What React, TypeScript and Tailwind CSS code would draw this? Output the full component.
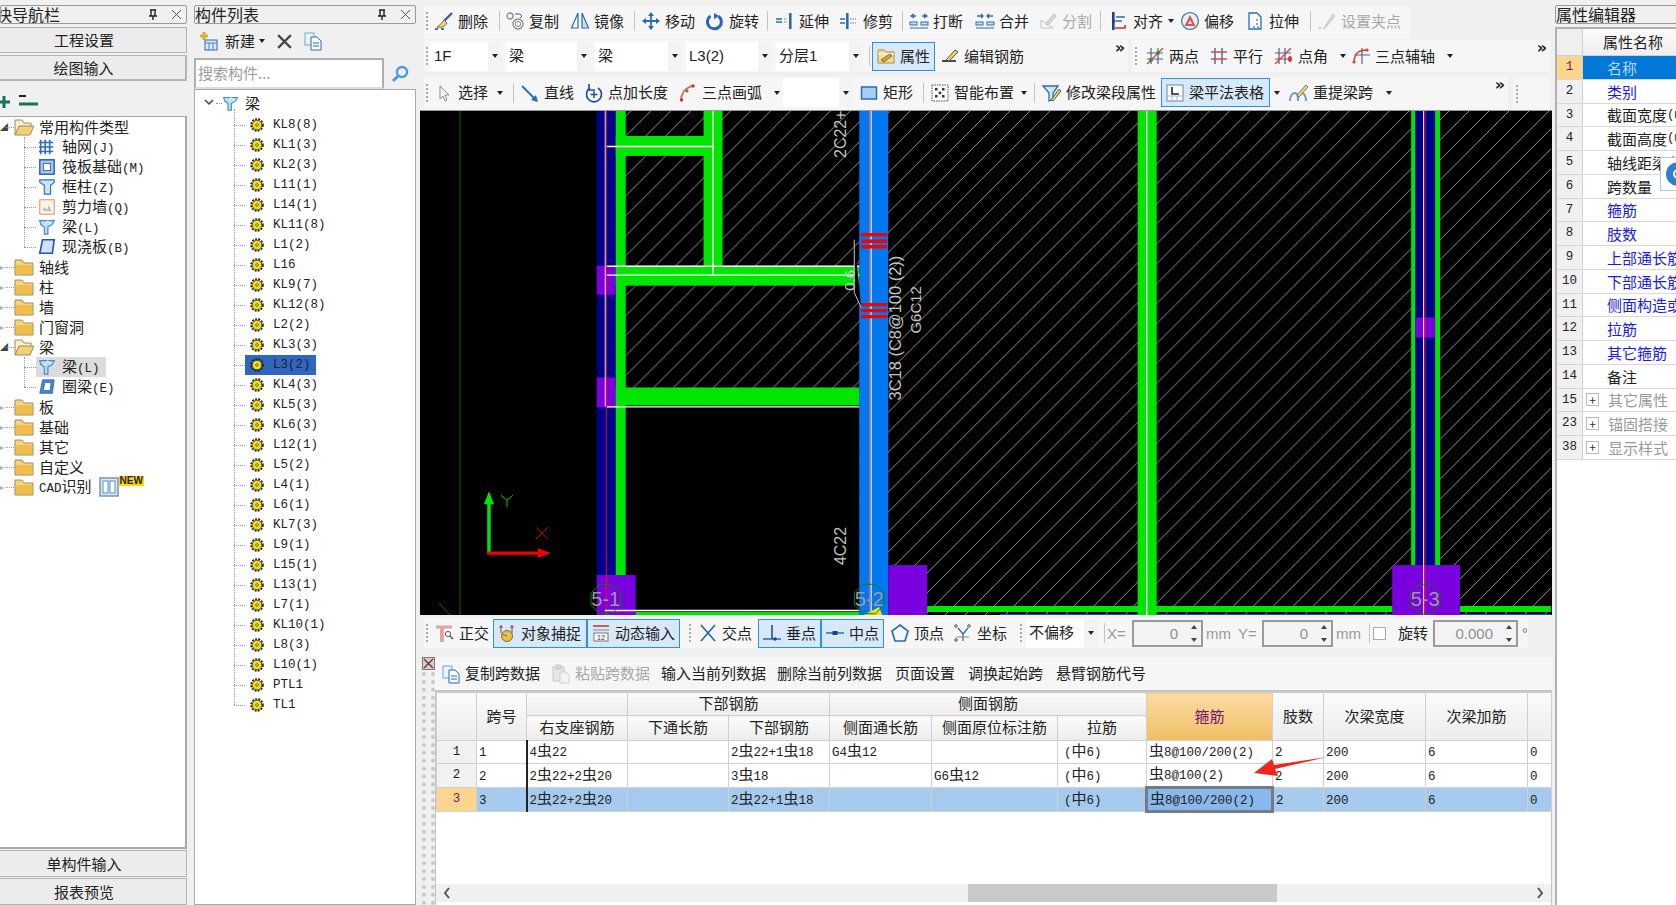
import React from 'react';

const BLUE = '#2b6cb0';
const monoCls = "font-['Liberation_Mono','Noto_Sans_CJK_SC',monospace] text-[12.5px]";

function Mixed({ text }: { text: string }) {
  const parts = text.split(/([\x00-\x7f]+)/).filter(Boolean);
  return (
    <>
      {parts.map((p, i) =>
        /^[\x00-\x7f]+$/.test(p) ? (
          <span key={i} className={monoCls}>{p}</span>
        ) : (
          <span key={i}>{p}</span>
        )
      )}
    </>
  );
}

function Svg({ children, size = 20 }: { children: React.ReactNode; size?: number }) {
  return (
    <svg width={size} height={size} viewBox="0 0 20 20" fill="none" className="shrink-0">
      {children}
    </svg>
  );
}

const icons: Record<string, React.ReactNode> = {
  erase: <><path d="M18 2 10 10" stroke="#3b5f96" strokeWidth="2.4" /><path d="M10 9c-2 3-4 5-7 7 4 1 8 0 10-4z" fill="#f4d768" stroke="#6b6b6b" /><path d="M1 18h3M7 18h3" stroke="#26467c" strokeWidth="1.4" /></>,
  copy: <><circle cx="5" cy="5" r="3" stroke="#888" strokeWidth="1.3" /><circle cx="13" cy="13" r="5" stroke="#888" strokeWidth="1.3" /><circle cx="13" cy="13" r="2.6" stroke="#888" /><path d="M10 3h5l2 2-2 2" stroke={BLUE} /></>,
  mirror: <><path d="M8 2 1.5 17H8z" stroke={BLUE} strokeWidth="1.2" /><path d="M12 2l6.5 15H12z" fill="#cfe0f5" stroke={BLUE} strokeWidth="1.2" /></>,
  move: <><path d="M10 2v16M2 10h16" stroke={BLUE} strokeWidth="1.8" /><path d="M10 1 7 5h6zM10 19l-3-4h6zM1 10l4-3v6zM19 10l-4-3v6z" fill={BLUE} /></>,
  rotate: <><path d="M5.500 5a7 7 0 1 0 8 .2" stroke="#2a62c4" strokeWidth="3" /><path d="M9 2v6l5-3z" fill="#2a62c4" /></>,
  extend: <><rect x="14" y="2" width="2.600" height="16" fill={BLUE} /><path d="M1 8h6M1 11h6" stroke={BLUE} strokeWidth="1.5" /><path d="M9 8h3M9 11h3" stroke="#777" strokeDasharray="1.5 1" /></>,
  trim: <><rect x="7" y="2" width="2.600" height="16" fill={BLUE} /><path d="M1 8h5M1 12h5" stroke={BLUE} strokeWidth="1.5" /><path d="M11 8h6M11 12h6" stroke="#777" strokeDasharray="1.5 1" /></>,
  break: <><path d="M2 5h5M13 5h5M5 3 2 5l3 2M15 3l3 2-3 2" stroke={BLUE} strokeWidth="1.3" /><rect x="1" y="11" width="7" height="3" fill="#cfe0f5" stroke={BLUE} /><rect x="12" y="11" width="7" height="3" fill="#cfe0f5" stroke={BLUE} /><path d="M1 17h18" stroke={BLUE} /></>,
  merge: <><path d="M2 5h6M12 5h6M6 3l2 2-2 2M14 3l-2 2 2 2" stroke={BLUE} strokeWidth="1.3" /><rect x="1" y="11" width="7" height="3" fill="#cfe0f5" stroke={BLUE} /><rect x="12" y="11" width="7" height="3" fill="#cfe0f5" stroke={BLUE} /><path d="M1 17h18" stroke={BLUE} /></>,
  split: <><path d="M3 17 3 9l12 8z" stroke="#c5c5c5" /><path d="M9 11l7-8 2 2-7 8-3 1z" fill="#ddd" stroke="#bbb" /></>,
  align: <><rect x="3" y="1" width="2.600" height="18" fill="#1f3f8f" /><path d="M7 6h9M7 10h6" stroke={BLUE} strokeWidth="1.6" /><path d="M6 17h10V14" stroke="#c0392b" strokeWidth="1.6" /><path d="M7 10 4.500 8v4z" fill="#1f3f8f" /></>,
  offset: <><circle cx="10" cy="10" r="8.400" stroke="#4d7f9e" strokeWidth="1.4" fill="#e8f0f6" /><path d="M10 4 4.500 15h11z" fill="#d9534f" /><path d="M10 9l-2 4h4z" fill="#f5f5f5" /></>,
  stretch: <><path d="M4 2h8l4 4v12H4z" fill="#f7f9fc" stroke={BLUE} strokeWidth="1.3" /><path d="M12 8v2M12 12v2M8 16h2M12 16h2" stroke="#444" /></>,
  grip: <><path d="M2 17h2M6 17h2" stroke="#bbb" strokeWidth="1.4" /><path d="M8 15 16 3l2 2-9 11z" fill="#ddd" stroke="#c4c4c4" /></>,
  attr: <><path d="M2 4h6l2 2h8v11H2z" fill="#f7dca0" stroke="#b5853a" /><path d="M2 8h16" stroke="#fff" /><path d="M5 14 14 8l2 2-8 6z" fill="#d7a53a" stroke="#8c6a24" /></>,
  editbar: <><path d="M2 15h14" stroke="#222" strokeWidth="1.6" /><path d="M6 14 15 4l3 2-9 9z" fill="#f2d15c" stroke="#555" /><path d="M6 14l-1 2 3-1" fill="#333" /></>,
  twopts: <><path d="M6 2v16M13 2v16M2 7h16M2 13h16" stroke="#555e8a" strokeWidth="1.2" /><path d="M2 18 18 2" stroke="#e23a3a" strokeWidth="1.2" /><circle cx="13" cy="7" r="2" fill="#3c8c3c" /><circle cx="6" cy="14" r="2" fill="#3c8c3c" /></>,
  parallel: <><path d="M6 2v16M13 2v16" stroke="#555e8a" strokeWidth="1.4" /><path d="M2 6h16M2 13h16" stroke="#c94d5a" strokeWidth="1.4" /></>,
  ptangle: <><path d="M5 2v16M11 2v16M1 7h16M1 13h16" stroke="#555e8a" strokeWidth="1.2" /><path d="M1 18 17 2" stroke="#e23a3a" strokeWidth="1.3" /><ellipse cx="16" cy="13" rx="2" ry="3" fill="#d33" /></>,
  threeaux: <><path d="M11 2v16M4 9h15" stroke="#555e8a" strokeWidth="1.2" /><path d="M3 16c0-7 4-12 13-12" stroke="#e23a3a" strokeWidth="1.5" /><circle cx="3" cy="16" r="1.6" fill="#e23a3a" /><circle cx="16" cy="4" r="1.6" fill="#e23a3a" /></>,
  select: <path d="M6 3v13l3-3 2 5 2-1-2-5h4z" fill="#fff" stroke="#7c8ba5" />,
  line: <><path d="M2 3 16 17" stroke={BLUE} strokeWidth="1.8" /><path d="M18 19l-7-2 5-5z" fill={BLUE} /></>,
  ptlen: <><path d="M6 5a7.500 7.500 0 1 0 8 0" stroke="#1f4f8f" strokeWidth="1.6" /><path d="M5 1v6h6" stroke="#1f4f8f" strokeWidth="1.6" /><path d="M10 8v7M6.500 11.500h7" stroke="#1f4f8f" strokeWidth="1.4" /></>,
  arc: <><path d="M3 18C3 10 8 5 14 3" stroke="#d9584a" strokeWidth="1.6" /><circle cx="3.500" cy="17" r="1.7" fill="#c33" /><circle cx="9" cy="8" r="1.5" fill="#3c8c3c" /><circle cx="15" cy="3" r="1.7" fill="#c33" /></>,
  rect: <rect x="2.500" y="4" width="15" height="12" fill="#a9cdf2" stroke={BLUE} strokeWidth="1.5" />,
  smart: <><rect x="2" y="2" width="16" height="16" fill="#fafafa" stroke="#555" strokeDasharray="1.5 1" /><rect x="5" y="5" width="2.500" height="2.500" fill="#333" /><rect x="12" y="5" width="2.500" height="2.500" fill="#333" /><rect x="8.700" y="8.700" width="2.500" height="2.500" fill="#333" /><rect x="5" y="12" width="2.500" height="2.500" fill="#333" /><rect x="12" y="12" width="2.500" height="2.500" fill="#333" /></>,
  modify: <><path d="M1 3h15l-5 7v6l-4 2v-8z" fill="#cfe5fa" stroke={BLUE} strokeWidth="1.3" /><path d="M9 17 17 6l2 2-8 10z" fill="#f2d15c" stroke="#555" /></>,
  table: <><rect x="2" y="2" width="16" height="16" fill="#fff" stroke="#6b87a8" /><path d="M2 13h16M7 13v5M12 13v5" stroke="#9eb4cc" /><path d="M7 4v7h7" stroke="#222" strokeWidth="1.6" /></>,
  reextract: <><path d="M1 18c0-6 3-8 5-8s3 3 3 8M9 18c0-6 2-8 4-8s4 3 4 8" stroke="#6f9ccc" strokeWidth="2" /><path d="M8 12 17 2l2 2-9 10z" fill="#f4d768" stroke="#777" /></>,
  ortho: <><path d="M1 4h16" stroke="#e2a3a3" strokeWidth="3" /><path d="M7 4v15" stroke="#e2a3a3" strokeWidth="4" /><circle cx="13" cy="11" r="2.600" stroke="#555" fill="#fff" /><path d="m15 13 3 3" stroke="#555" strokeWidth="1.5" /></>,
  snap: <><path d="M4 2v8M15 2v8" stroke="#a33" /><path d="M2 4h4M13 4h4" stroke="#555" /><circle cx="10" cy="13" r="5.500" fill="#e8c14a" stroke="#8c6a24" /><path d="M5 11l5 2" stroke="#8c6a24" /></>,
  dynamic: <><path d="M2 3h16" stroke="#b33" strokeWidth="1.5" /><path d="M2 7h16" stroke="#888" /><rect x="3" y="10" width="14" height="8" fill="#fff" stroke="#777" /><text x="10" y="17" textAnchor="middle" fontSize="7" fill="#333" fontFamily="Liberation Sans">12</text></>,
  cross: <path d="M3 2 17 18M17 2 3 18" stroke={BLUE} strokeWidth="1.8" />,
  perp: <><path d="M1 16h18" stroke={BLUE} strokeWidth="1.5" /><path d="M10 2v14" stroke="#1f3f8f" strokeWidth="1.5" /><circle cx="13" cy="16" r="1.8" fill="#1f3f8f" /></>,
  mid: <><path d="M1 10h18" stroke={BLUE} strokeWidth="1.5" /><rect x="7.500" y="8" width="5" height="4" fill="#1f3f8f" /></>,
  vertex: <path d="M10 2 18 8l-3 10H5L2 8z" stroke={BLUE} strokeWidth="1.7" fill="#f4f8fc" />,
  coord: <><path d="M5 5l5 6 5-6M10 11v7" stroke={BLUE} strokeWidth="1.3" /><path d="M3 14h13" stroke="#888" /><circle cx="3" cy="3" r="1.3" stroke="#555" /><circle cx="16" cy="3" r="1.3" stroke="#555" /><circle cx="3" cy="17" r="1.3" stroke="#555" /></>,
  newdoc: <><path d="M5 1v8M1 5h8" stroke="#d4b23e" strokeWidth="3" /><rect x="6" y="9" width="12" height="10" fill="#dce9f7" stroke={BLUE} /><path d="M6 12h12M10 12v7M14 12v7" stroke={BLUE} strokeWidth=".8" /></>,
  copydoc: <><rect x="2" y="2" width="9" height="12" fill="#eaf2fb" stroke="#7aa4d4" /><path d="M8 6h6l4 4v9H8z" fill="#f8fbff" stroke={BLUE} /><path d="M10 12h6M10 15h6" stroke={BLUE} /></>,
  pastedoc: <><rect x="2" y="3" width="11" height="14" fill="#e6e6e6" stroke="#c8c8c8" /><rect x="5" y="1" width="5" height="4" fill="#d8d8d8" stroke="#c8c8c8" /><path d="M9 8h6l3 3v8H9z" fill="#f3f3f3" stroke="#cfcfcf" /></>,
};

const treeIcons: Record<string, React.ReactNode> = {
  grid: <path d="M3 2v16M8 2v16M13 2v16M1 5h16M1 10h16M1 15h16" stroke="#2f6cc4" strokeWidth="1.8" />,
  raft: <><rect x="2" y="2" width="16" height="16" fill="#a9c8ea" stroke="#2b5ea8" strokeWidth="1.6" /><rect x="6" y="6" width="8" height="8" fill="#fff" stroke="#2b5ea8" /></>,
  column: <path d="M2 2h16v3l-4 3v10H7V8L2 5z" fill="#cfe3f7" stroke="#2f73c0" strokeWidth="1.3" />,
  wall: <><rect x="2" y="2" width="16" height="16" fill="#fff3e6" stroke="#c98a57" /><path d="M5 14l2-4 3 3 2-5 3 7z" fill="#bbb" /></>,
  beam: <><path d="M2 3h16l-2 4-5 3v8H7v-8L3 7z" fill="#bcdcf8" stroke="#3d8ad6" strokeWidth="1.3" /><path d="M10 3l5 4M7 8l4-5" stroke="#fff" /></>,
  slab: <path d="M5 2h13l-2 15H2z" fill="#cfe2f7" stroke="#1f56b0" strokeWidth="1.8" />,
  ring: <path d="M5 2h13l-2 15H2zM7.500 5 6 14h7.500l1-9z" fill="#4a86d4" stroke="#1f56b0" strokeWidth=".8" fillRule="evenodd" />,
  folder: <><path d="M1 6V3h7l2 3h9v12H1z" fill="#f5d47a" stroke="#a08a5c" /><path d="M2 8h16v9H2z" fill="#f1be4e" /></>,
  folderOpen: <><path d="M1 18V3h7l2 3h7v3" fill="#fbeec8" stroke="#a08a5c" /><path d="M1 18 5 9h15l-4 9z" fill="#f3cf75" stroke="#a08a5c" /></>,
  cad: <><rect x="1" y="1" width="18" height="18" fill="#dbe6f3" stroke="#8093a8" strokeWidth="1.5" /><rect x="4" y="4" width="5" height="12" fill="#fff" stroke="#4a90d9" /><rect x="11" y="4" width="5" height="12" fill="#fff" stroke="#4a90d9" /></>,
};

function Gear() {
  return (
    <svg width="14" height="14" viewBox="0 0 14 14" className="shrink-0">
      <circle cx="7" cy="7" r="6" fill="none" stroke="#222" strokeWidth="1.6" strokeDasharray="2 1.2" />
      <circle cx="7" cy="7" r="4.800" fill="#f2e400" stroke="#222" strokeWidth=".8" />
      <circle cx="7" cy="7" r="1.300" fill="#fff" stroke="#222" strokeWidth=".7" />
    </svg>
  );
}

function Arrow({ className = '' }: { className?: string }) {
  return <span className={`inline-block w-0 h-0 border-x-[3px] border-x-transparent border-t-[4px] border-t-[#222] shrink-0 ${className}`} />;
}

function Handle({ className = '' }: { className?: string }) {
  return <span className={`inline-block w-[2px] h-[18px] border-l-2 border-dotted border-[#aaa] shrink-0 ${className}`} />;
}

function Sep({ className = '' }: { className?: string }) {
  return (
    <span className={`flex justify-start shrink-0 ${className}`}>
      <span className="w-px h-[20px] bg-[#c4c4c4]" />
    </span>
  );
}

function Tool({ icon, label, className = '', gray, arrow }: { icon: string; label: string; className?: string; gray?: boolean; arrow?: string }) {
  return (
    <span className={`flex items-center gap-[4px] shrink-0 whitespace-nowrap leading-none ${gray ? 'text-[#a8a8a8]' : ''} ${className}`}>
      <Svg>{icons[icon]}</Svg>
      <span className="-mt-[2px]">{label}</span>
      {arrow && <Arrow className={arrow} />}
    </span>
  );
}

function Active({ icon, label, className = '' }: { icon: string; label: string; className?: string }) {
  return (
    <span className={`flex items-center gap-[4px] pl-[3px] h-[29px] border border-[#2f8fdc] bg-[#d7e9f8] shrink-0 whitespace-nowrap leading-none ${className}`}>
      <Svg>{icons[icon]}</Svg>
      <span className="-mt-[2px]">{label}</span>
    </span>
  );
}

function Combo({ text, className = '' }: { text: string; className?: string }) {
  return (
    <span className={`flex items-center justify-between h-[29px] bg-white shrink-0 leading-none ${className}`}>
      <span className="pl-[3px] -mt-[2px] font-['Liberation_Sans','Noto_Sans_CJK_SC',sans-serif] text-[15px]">{text}</span>
      <span className="w-[14px] h-full bg-[#f3f3f3] flex items-center justify-center">
        <Arrow />
      </span>
    </span>
  );
}

function Chevrons({ className = '' }: { className?: string }) {
  return <span className={`font-['DejaVu_Sans',sans-serif] font-bold text-[16px] leading-none ${className}`}>»</span>;
}

function Spin({ value, className = '' }: { value: string; className?: string }) {
  return (
    <span className={`relative flex items-center justify-end h-[27px] bg-[#f3f3f3] border-2 border-[#9a9a9a] pr-[23px] text-[#8f8f8f] font-['Liberation_Sans',sans-serif] text-[15px] leading-none shrink-0 ${className}`}>
      {value}
      <span className="absolute right-[4px] top-[3px] w-0 h-0 border-x-[3px] border-x-transparent border-b-[4px] border-b-[#444]" />
      <span className="absolute right-[4px] bottom-[3px] w-0 h-0 border-x-[3px] border-x-transparent border-t-[4px] border-t-[#444]" />
    </span>
  );
}

function TitleBar({ title, clip, tools = true, className = '' }: { title: string; clip?: string; tools?: boolean; className?: string }) {
  return (
    <div className={`mt-[5px] h-[19px] border border-[#9a9a9a] rounded-[2px] bg-[#f0f0f0] flex items-center justify-between overflow-hidden leading-none text-[16px] ${className}`}>
      <span className={`whitespace-nowrap -mt-[1px] ${clip ?? ''}`}>{title}</span>
      {tools && (
        <span className="flex items-center gap-[12px] pr-[4px]">
          <svg width="12" height="12" viewBox="0 0 12 12"><path d="M3 1h6M4 1v6h4V1M2 7h8M6 7v4" stroke="#222" strokeWidth="1.4" fill="none" /></svg>
          <svg width="11" height="11" viewBox="0 0 11 11"><path d="M1 1l9 9M10 1l-9 9" stroke="#555" /></svg>
        </span>
      )}
    </div>
  );
}

function NavButton({ label, className = '' }: { label: string; className?: string }) {
  return (
    <div className={`h-[26px] bg-[#ececec] border border-[#b5b5b5] border-l-0 flex items-center justify-center pr-[18px] leading-none ${className}`}>
      <span className="-mt-[1px]">{label}</span>
    </div>
  );
}

function LeftTree() {
  const folderRow = (label: string, open?: boolean, extra?: React.ReactNode) => (
    <div className="h-[20px] flex items-center leading-none" key={label}>
      <span className={`w-[5px] text-[8px] ${open ? 'text-[#444]' : 'text-[#aaa]'}`}>{open ? '◢' : '▸'}</span>
      <span className="w-[9px] border-t border-dotted border-[#999]" />
      <Svg>{treeIcons[open ? 'folderOpen' : 'folder']}</Svg>
      <span className="ml-[5px] -mt-[1px]"><Mixed text={label} /></span>
      {extra}
    </div>
  );
  const child = (label: string, icon: string, highlighted?: boolean) => (
    <div className="h-[20px] flex items-center leading-none" key={label}>
      <span className="w-[12px] border-t border-dotted border-[#999]" />
      <span className={`flex items-center h-[20px] pl-[2px] ${highlighted ? 'bg-[#dcdcdc] pr-[6px]' : ''}`}>
        <Svg size={18}>{treeIcons[icon]}</Svg>
        <span className="ml-[6px] -mt-[1px]"><Mixed text={label} /></span>
      </span>
    </div>
  );
  return (
    <div className="flex-1 bg-white border-b-2 border-r-2 border-t border-[#a8a8a8] overflow-hidden">
      {folderRow('常用构件类型', true)}
      <div className="relative pl-[24px]">
        <span className="absolute left-[24px] top-0 bottom-[10px] border-l border-dotted border-[#999]" />
        {child('轴网(J)', 'grid')}
        {child('筏板基础(M)', 'raft')}
        {child('框柱(Z)', 'column')}
        {child('剪力墙(Q)', 'wall')}
        {child('梁(L)', 'beam')}
        {child('现浇板(B)', 'slab')}
      </div>
      {['轴线', '柱', '墙', '门窗洞'].map((f) => folderRow(f))}
      {folderRow('梁', true)}
      <div className="relative pl-[24px]">
        <span className="absolute left-[24px] top-0 bottom-[10px] border-l border-dotted border-[#999]" />
        {child('梁(L)', 'beam', true)}
        {child('圈梁(E)', 'ring')}
      </div>
      {['板', '基础', '其它', '自定义'].map((f) => folderRow(f))}
      {folderRow(
        'CAD识别',
        false,
        <span className="flex items-start ml-[7px]">
          <Svg>{treeIcons.cad}</Svg>
          <span className="bg-[#ffd800] text-[10px] font-bold font-['Liberation_Sans',sans-serif] leading-[10px] px-[1px] -mt-[1px]">NEW</span>
        </span>
      )}
    </div>
  );
}

const members = ['KL8(8)', 'KL1(3)', 'KL2(3)', 'L11(1)', 'L14(1)', 'KL11(8)', 'L1(2)', 'L16', 'KL9(7)', 'KL12(8)', 'L2(2)', 'KL3(3)', 'L3(2)', 'KL4(3)', 'KL5(3)', 'KL6(3)', 'L12(1)', 'L5(2)', 'L4(1)', 'L6(1)', 'KL7(3)', 'L9(1)', 'L15(1)', 'L13(1)', 'L7(1)', 'KL10(1)', 'L8(3)', 'L10(1)', 'PTL1', 'TL1'];

function MemberTree() {
  return (
    <div className="flex-1 bg-white border border-[#a8a8a8] pt-[3px] overflow-hidden">
      <div className="h-[20px] flex items-center leading-none pl-[9px]">
        <svg width="10" height="8" viewBox="0 0 10 8"><path d="M1 1l4 4 4-4" stroke="#444" strokeWidth="1.5" fill="none" /></svg>
        <span className="w-[6px] ml-[2px] border-t border-dotted border-[#999]" />
        <Svg size={17}>{treeIcons.beam}</Svg>
        <span className="ml-[6px] -mt-[1px]">梁</span>
      </div>
      <div className="relative ml-[39px] mt-[2px]">
        <span className="absolute left-0 -top-[6px] bottom-[10px] border-l border-dotted border-[#999]" />
        {members.map((m) => (
          <div key={m} className="h-[20px] flex items-center leading-none">
            <span className="w-[11px] border-t border-dotted border-[#999]" />
            <span className={`flex items-center h-[20px] w-[71px] pl-[5px] ${m === 'L3(2)' ? 'bg-[#3066c0]' : ''}`}>
              <Gear />
              <span className={`ml-[9px] ${monoCls}`}>{m}</span>
            </span>
          </div>
        ))}
      </div>
    </div>
  );
}

function Octagon({ cx, cy, label }: { cx: number; cy: number; label: string }) {
  const pts = Array.from({ length: 8 }, (_, i) => {
    const a = (Math.PI / 4) * i + Math.PI / 8;
    return `${cx + 16 * Math.cos(a)},${cy + 16 * Math.sin(a)}`;
  }).join(' ');
  return (
    <g>
      <polygon points={pts} fill="none" stroke="#0a7a0a" />
      <text x={cx} y={cy + 7} textAnchor="middle" fontSize="20" fill="#9c9c9c" fontFamily="Liberation Sans">{label}</text>
    </g>
  );
}

function VText({ x, y, text, size = 16 }: { x: number; y: number; text: string; size?: number }) {
  return (
    <text transform={`translate(${x} ${y}) rotate(-90)`} fontSize={size} fill="#c4c4c4" fontFamily="Liberation Sans">{text}</text>
  );
}

function CadCanvas() {
  return (
    <div className="h-[505px] w-[1132px] border-t border-[#999] bg-black shrink-0">
      <svg viewBox="420 110 1132 505" className="block w-full h-full">
        <defs>
          <pattern id="hatch" width="20" height="20" patternUnits="userSpaceOnUse">
            <path d="M-2 22 22 -2" stroke="#939393" strokeWidth="1" />
          </pattern>
        </defs>
        <rect x="615" y="110" width="937" height="505" fill="url(#hatch)" />
        <rect x="624" y="405" width="235" height="210" fill="#000" />
        <path d="M459 110v505" stroke="#0a6a0a" />
        <path d="M438 603l11 12" stroke="#0a6a0a" />
        {/* left column */}
        <rect x="596" y="110" width="19" height="505" fill="#00008c" />
        <rect x="615" y="110" width="10" height="505" fill="#00e600" />
        <rect x="596" y="265" width="19" height="29" fill="#7a00e0" />
        <rect x="596" y="377" width="19" height="30" fill="#7a00e0" />
        <rect x="596" y="575" width="39" height="40" fill="#7a00e0" />
        <path d="M604.500 110v296" stroke="#fff" />
        <path d="M605.500 110v505" stroke="#f01010" />
        {/* beams */}
        <rect x="615" y="135" width="90" height="20" fill="#00e600" />
        <rect x="703" y="110" width="19" height="155" fill="#00e600" />
        <rect x="615" y="265" width="244" height="20" fill="#00e600" />
        <rect x="615" y="387" width="244" height="18" fill="#00e600" />
        <rect x="635" y="612" width="224" height="3" fill="#00e600" />
        <path d="M606 145.500h106M712.500 110v164M606 265.500h262M606 274.500h262M606 406.500h262M604 610.500h255" stroke="#fff" strokeWidth="1.4" />
        {/* blue beam */}
        <rect x="859" y="110" width="29" height="505" fill="#0078f0" />
        <path d="M869.500 110v505" stroke="#f06060" />
        <path d="M871 110v505" stroke="#fff" />
        <path d="M861 234h26M861 240.500h26M861 246h26M861 304h26M861 310h26M861 316h26" stroke="#f00000" strokeWidth="3.4" />
        <path d="M854 239v53l7 15" stroke="#c8c8c8" />
        <VText x={855} y={290} text="0.6" size={15} />
        <rect x="888" y="565" width="39" height="50" fill="#7a00e0" />
        <rect x="927" y="606" width="625" height="6" fill="#00e600" />
        <path d="M1000 614.500h552" stroke="#2a4fc0" />
        <path d="M863 615l16-8 3 8z" fill="#f5e100" />
        {/* right beams */}
        <rect x="1138" y="110" width="19" height="505" fill="#00e600" />
        <path d="M1147 110v505" stroke="#fff" strokeWidth="1.4" />
        <rect x="1412" y="110" width="29" height="505" fill="#00e600" />
        <rect x="1416" y="110" width="20" height="505" fill="#00008c" />
        <rect x="1416" y="317" width="20" height="20" fill="#7a00e0" />
        <rect x="1393" y="565" width="68" height="50" fill="#7a00e0" />
        <path d="M1424.500 110v505" stroke="#fff" />
        <path d="M1426 110v505" stroke="#f01010" />
        {/* labels */}
        <VText x={846} y={157} text="2C22+" />
        <VText x={846} y={565} text="4C22" />
        <VText x={901} y={400} text="3C18 (C8@100 (2))" size={16.500} />
        <VText x={921} y={333} text="G6C12" size={15} />
        <Octagon cx={605} cy={599} label="5-1" />
        <Octagon cx={869} cy={599} label="5-2" />
        <Octagon cx={1426} cy={599} label="5-3" />
        {/* axes */}
        <path d="M488 553v-50" stroke="#00e600" strokeWidth="3.5" />
        <path d="M488 491l-5 13h10z" fill="#00e600" />
        <path d="M486 553h52" stroke="#f00000" strokeWidth="3.5" />
        <path d="M550 553l-13-5v10z" fill="#f00000" />
        <path d="M500 495l6 5 6-5M506 500v7" stroke="#00c800" fill="none" />
        <path d="M535 527l12 12M547 527l-12 12" stroke="#d00000" />
      </svg>
    </div>
  );
}

const headCls = 'border border-[#d0d0d0] bg-gradient-to-b from-[#fbfbfb] to-[#ececec] text-center font-normal p-0 pb-[3px]';
const rows = [
  ['1', '1', '4虫22', '', '2虫22+1虫18', 'G4虫12', '', '(中6)', '虫8@100/200(2)', '2', '200', '6', '0'],
  ['2', '2', '2虫22+2虫20', '', '3虫18', '', 'G6虫12', '(中6)', '虫8@100(2)', '2', '200', '6', '0'],
  ['3', '3', '2虫22+2虫20', '', '2虫22+1虫18', '', '', '(中6)', '虫8@100/200(2)', '2', '200', '6', '0'],
];

function RebarTable() {
  return (
    <table className="w-full table-fixed leading-none">
      <colgroup>
        <col className="w-[40px]" /><col className="w-[50px]" /><col className="w-[101px]" /><col className="w-[101px]" /><col className="w-[101px]" /><col className="w-[102px]" /><col className="w-[126px]" /><col className="w-[89px]" /><col className="w-[126px]" /><col className="w-[51px]" /><col className="w-[102px]" /><col className="w-[102px]" /><col className="w-[24px]" />
      </colgroup>
      <thead>
        <tr className="h-[23px]">
          <th rowSpan={2} className={headCls} />
          <th rowSpan={2} className={headCls}>跨号</th>
          <th className={headCls} />
          <th colSpan={2} className={headCls}>下部钢筋</th>
          <th colSpan={3} className={headCls}>侧面钢筋</th>
          <th rowSpan={2} className="border border-[#d0d0d0] bg-gradient-to-b from-[#fbdca3] to-[#f0bf63] text-[#76146e] font-normal p-0 pb-[3px]">箍筋</th>
          <th rowSpan={2} className={headCls}>肢数</th>
          <th rowSpan={2} className={headCls}>次梁宽度</th>
          <th rowSpan={2} className={headCls}>次梁加筋</th>
          <th rowSpan={2} className={headCls} />
        </tr>
        <tr className="h-[25px]">
          {['右支座钢筋', '下通长筋', '下部钢筋', '侧面通长筋', '侧面原位标注筋', '拉筋'].map((h) => (
            <th key={h} className={headCls}>{h}</th>
          ))}
        </tr>
      </thead>
      <tbody>
        {rows.map((r, ri) => {
          const selected = ri === 2;
          return (
            <tr key={r[0]} className={`${ri === 0 ? 'h-[23px]' : 'h-[24px]'} ${selected ? 'bg-[#a6c9ee]' : 'bg-white'}`}>
              {r.map((c, i) => {
                if (i === 0) {
                  return (
                    <td key={i} className={`text-center border border-[#d0d0d0] p-0 ${monoCls} ${selected ? 'bg-[#fdd58c] text-[#76146e]' : 'bg-[#f1f1f1]'}`}>{c}</td>
                  );
                }
                const current = selected && i === 8;
                return (
                  <td
                    key={i}
                    className={`whitespace-nowrap overflow-hidden p-0 pl-[2px] pb-[2px] ${i === 2 ? 'border-l-2 border-l-[#222] border-y border-r border-y-[#d0d0d0] border-r-[#d0d0d0]' : 'border border-[#d0d0d0]'} ${current ? 'bg-[#88b9ea] !border-[3px] !border-[#727b86]' : ''} ${i === 7 ? 'pl-[6px]' : ''}`}
                  >
                    <Mixed text={c} />
                  </td>
                );
              })}
            </tr>
          );
        })}
      </tbody>
    </table>
  );
}

const propRows: [string, string, boolean][] = [
  ['1', '名称', true], ['2', '类别', true], ['3', '截面宽度(mm)', false], ['4', '截面高度(mm)', false],
  ['5', '轴线距梁左边线距离(mm)', false], ['6', '跨数量', false], ['7', '箍筋', true], ['8', '肢数', true],
  ['9', '上部通长筋', true], ['10', '下部通长筋', true], ['11', '侧面构造或受扭筋(总配筋值)', true], ['12', '拉筋', true],
  ['13', '其它箍筋', true], ['14', '备注', false],
];

function PropEditor() {
  return (
    <div className="relative flex-1 mt-[3px] bg-white border-l-2 border-t-2 border-[#b0b0b0] overflow-hidden">
      <div className="h-[27px] flex border-b border-[#cfcfcf]">
        <div className="w-[26px] bg-[#efefef] border-r border-[#cfcfcf] shrink-0" />
        <div className="flex-1 bg-gradient-to-b from-[#fbfbfb] to-[#eeeeee] flex items-center pl-[20px] whitespace-nowrap leading-none"><span className="-mt-[2px]">属性名称</span></div>
      </div>
      {propRows.map(([n, label, blue]) => {
        const selected = n === '1';
        return (
          <div key={n} className={`h-[23.75px] flex border-b border-[#d8d8d8] leading-none ${selected ? 'bg-[#0078d7]' : ''}`}>
            <div className={`w-[26px] shrink-0 flex items-center justify-center border-r border-[#cfcfcf] ${monoCls} ${selected ? 'bg-[#fdd58c] text-[#76146e]' : 'bg-[#f0f0f0]'}`}>{n}</div>
            <div className={`pl-[24px] flex items-center whitespace-nowrap ${selected ? 'text-[#bcd9f5]' : blue ? 'text-[#1a1ae6]' : ''}`}>
              <Mixed text={label} />
            </div>
          </div>
        );
      })}
      {[['15', '其它属性'], ['23', '锚固搭接'], ['38', '显示样式']].map(([n, label]) => (
        <div key={n} className="h-[23.75px] flex border-b border-[#d8d8d8] leading-none">
          <div className={`w-[26px] shrink-0 flex items-center justify-center border-r border-[#cfcfcf] bg-[#f0f0f0] ${monoCls}`}>{n}</div>
          <div className="flex items-center pl-[3px] text-[#9a9a9a]">
            <span className="w-[13px] h-[13px] border border-[#bbb] flex items-center justify-center text-[#333] text-[12px] mr-[9px]">+</span>
            {label}
          </div>
        </div>
      ))}
      {/* floating assistant tab */}
      <div className="absolute left-[103px] top-[128px] w-[20px] h-[34px] bg-white border border-[#a8c8ee] flex items-center pl-[5px]">
        <span className="w-[24px] h-[24px] rounded-full bg-[#2f7fd1] shrink-0 flex items-center justify-center">
          <span className="w-[10px] h-[10px] rounded-full border-2 border-white" />
        </span>
      </div>
    </div>
  );
}

export default function App() {
  return (
    <div className="w-[1676px] h-[905px] overflow-hidden flex bg-[#f0f0f0] text-[15px] text-[#222] font-['Noto_Sans_CJK_SC','Liberation_Sans',sans-serif]">
      {/* quick nav */}
      <div className="w-[187px] shrink-0 flex flex-col">
        <TitleBar title="快导航栏" clip="-ml-[5px]" />
        <NavButton label="工程设置" className="mt-[3px]" />
        <NavButton label="绘图输入" className="mt-[2px] border-b-2 border-r-2 border-[#8a8a8a]" />
        <div className="h-[35px] flex items-center shrink-0">
          <svg width="42" height="24" viewBox="0 0 42 24">
            <path d="M-2 15h12M4 9v12" stroke="#12735f" strokeWidth="3" />
            <path d="M19 9h7" stroke="#222" strokeWidth="2" />
            <path d="M19 17h19" stroke="#12735f" strokeWidth="3" />
          </svg>
        </div>
        <LeftTree />
        <NavButton label="单构件输入" className="mt-[1px] h-[27px]" />
        <NavButton label="报表预览" className="mt-[1px] h-[27px]" />
      </div>

      {/* member list */}
      <div className="ml-[7px] w-[222px] shrink-0 flex flex-col">
        <TitleBar title="构件列表" />
        <div className="h-[34px] flex items-center pl-[5px] shrink-0">
          <Svg>{icons.newdoc}</Svg>
          <span className="ml-[6px] -mt-[2px] leading-none">新建</span>
          <Arrow className="ml-[4px]" />
          <svg width="17" height="17" viewBox="0 0 16 16" className="ml-[11px]"><path d="M2 2l12 12M14 2 2 14" stroke="#444" strokeWidth="2" /></svg>
          <span className="ml-[10px]"><Svg>{icons.copydoc}</Svg></span>
        </div>
        <div className="h-[31px] flex shrink-0">
          <div className="w-[190px] bg-white border-2 border-[#b0b0b0] border-b-[#ddd] flex items-center pl-[2px] text-[#9c9c9c] leading-none"><span className="-mt-[2px]">搜索构件...</span></div>
          <div className="flex-1 flex items-center justify-center">
            <svg width="18" height="18" viewBox="0 0 18 18"><circle cx="11" cy="7" r="5" stroke="#4a9be0" strokeWidth="2.4" fill="none" /><path d="M7 11l-5 5" stroke="#4a9be0" strokeWidth="3" /></svg>
          </div>
        </div>
        <MemberTree />
      </div>

      {/* main */}
      <div className="ml-[4px] w-[1133px] shrink-0 flex flex-col">
        <div className="mt-[6px] ml-[4px] h-[33px] w-[986px] bg-[#f6f6f6] flex items-center pb-[3px] shrink-0">
          <Handle className="ml-[2px] mr-[6px]" />
          <Tool icon="erase" label="删除" className="w-[65px]" />
          <Sep className="w-[6px]" />
          <Tool icon="copy" label="复制" className="w-[65px]" />
          <Tool icon="mirror" label="镜像" className="w-[64px]" />
          <Sep className="w-[7px]" />
          <Tool icon="move" label="移动" className="w-[64px]" />
          <Tool icon="rotate" label="旋转" className="w-[62px]" />
          <Sep className="w-[8px]" />
          <Tool icon="extend" label="延伸" className="w-[64px]" />
          <Tool icon="trim" label="修剪" className="w-[63px]" />
          <Sep className="w-[7px]" />
          <Tool icon="break" label="打断" className="w-[66px]" />
          <Tool icon="merge" label="合并" className="w-[63px]" />
          <Tool icon="split" label="分割" className="w-[62px]" gray />
          <Sep className="w-[9px]" />
          <Tool icon="align" label="对齐" arrow="ml-[1px]" className="w-[71px]" />
          <Tool icon="offset" label="偏移" className="w-[65px]" />
          <Tool icon="stretch" label="拉伸" className="w-[65px]" />
          <Sep className="w-[7px]" />
          <Tool icon="grip" label="设置夹点" gray />
        </div>

        <div className="ml-[4px] h-[32px] flex shrink-0 mt-[1px]">
          <div className="w-[704px] bg-[#f6f6f6] flex items-center relative">
            <Handle className="ml-[2px] mr-[3px]" />
            <Combo text="1F" className="w-[71px]" />
            <Combo text="梁" className="ml-[4px] w-[85px]" />
            <Combo text="梁" className="ml-[4px] w-[87px]" />
            <Combo text="L3(2)" className="ml-[4px] w-[86px]" />
            <Combo text="分层1" className="ml-[4px] w-[87px]" />
            <Sep className="ml-[6px] w-[3px]" />
            <Active icon="attr" label="属性" className="w-[63px]" />
            <Tool icon="editbar" label="编辑钢筋" className="ml-[5px]" />
            <Chevrons className="absolute right-[3px] top-[0px]" />
          </div>
          <div className="ml-[4px] w-[418px] bg-[#f6f6f6] flex items-center relative">
            <Handle className="ml-[3px] mr-[8px]" />
            <Tool icon="twopts" label="两点" className="w-[64px]" />
            <Tool icon="parallel" label="平行" className="w-[65px]" />
            <Tool icon="ptangle" label="点角" arrow="ml-[8px]" className="w-[77px]" />
            <Tool icon="threeaux" label="三点辅轴" arrow="ml-[8px]" />
            <Chevrons className="absolute right-[3px] top-[0px]" />
          </div>
        </div>

        <div className="ml-[4px] mt-[5px] h-[33px] flex shrink-0">
          <div className="w-[1084px] bg-[#f6f6f6] flex items-center pb-[2px] relative">
            <Handle className="ml-[2px] mr-[6px]" />
            <Tool icon="select" label="选择" arrow="ml-[5px]" className="w-[79px]" />
            <Sep className="w-[7px]" />
            <Tool icon="line" label="直线" className="w-[64px]" />
            <Tool icon="ptlen" label="点加长度" className="w-[94px]" />
            <Tool icon="arc" label="三点画弧" arrow="ml-[8px]" className="w-[105px]" />
            <Combo text="" className="w-[70px] bg-white" />
            <Tool icon="rect" label="矩形" className="ml-[6px] w-[64px]" />
            <Sep className="w-[7px]" />
            <Tool icon="smart" label="智能布置" arrow="ml-[3px]" className="w-[104px]" />
            <Sep className="w-[8px]" />
            <Tool icon="modify" label="修改梁段属性" className="w-[119px]" />
            <Active icon="table" label="梁平法表格" className="w-[109px]" />
            <Arrow className="ml-[4px] mr-[9px]" />
            <Tool icon="reextract" label="重提梁跨" arrow="ml-[9px]" />
            <Chevrons className="absolute right-[3px] top-[0px]" />
          </div>
          <div className="ml-[5px] w-[37px] bg-[#f6f6f6] flex items-center pl-[3px]">
            <Handle />
          </div>
        </div>

        <CadCanvas />

        <div className="ml-[4px] mt-[3px] h-[30px] w-[1104px] bg-[#f6f6f6] flex items-center shrink-0">
          <Handle className="ml-[2px] mr-[7px]" />
          <Tool icon="ortho" label="正交" className="w-[58px]" />
          <Active icon="snap" label="对象捕捉" className="w-[94px]" />
          <Active icon="dynamic" label="动态输入" className="w-[93px]" />
          <Handle className="ml-[9px] mr-[7px]" />
          <Tool icon="cross" label="交点" className="w-[60px]" />
          <Active icon="perp" label="垂点" className="w-[63px]" />
          <Active icon="mid" label="中点" className="w-[63px]" />
          <Tool icon="vertex" label="顶点" className="ml-[6px] w-[63px]" />
          <Tool icon="coord" label="坐标" className="w-[67px]" />
          <Handle className="mr-[4px]" />
          <Combo text="不偏移" className="w-[72px]" />
          <Sep className="ml-[6px] w-[3px]" />
          <span className="w-[25px] text-[#9a9a9a] font-['Liberation_Sans',sans-serif] leading-none">X=</span>
          <Spin value="0" className="w-[71px]" />
          <span className="ml-[3px] w-[32px] text-[#9a9a9a] font-['Liberation_Sans',sans-serif] leading-none">mm</span>
          <span className="w-[24px] text-[#9a9a9a] font-['Liberation_Sans',sans-serif] leading-none">Y=</span>
          <Spin value="0" className="w-[71px]" />
          <span className="ml-[3px] w-[33px] text-[#9a9a9a] font-['Liberation_Sans',sans-serif] leading-none">mm</span>
          <Sep className="w-[4px]" />
          <span className="w-[13px] h-[13px] border border-[#aaa] bg-white shrink-0" />
          <span className="ml-[12px] -mt-[2px] w-[35px] leading-none">旋转</span>
          <Spin value="0.000" className="w-[85px]" />
          <span className="ml-[4px] text-[#777] leading-none">°</span>
        </div>

        <div className="relative ml-[2px] mt-[9px] flex-1 flex min-h-0">
          <div className="w-[13px] shrink-0 flex flex-col">
            <svg width="13" height="13" viewBox="0 0 13 13" className="shrink-0"><rect x=".5" y=".5" width="12" height="12" fill="#e8c6c6" stroke="#777" /><path d="M2 2l9 9M11 2l-9 9" stroke="#444" strokeWidth="1.4" /></svg>
            <div className="flex-1 mt-[2px] border-x-[4px] border-dotted border-[#c8c8c8]" />
          </div>
          <div className="flex-1 flex flex-col min-w-0">
            <div className="h-[33px] bg-[#f6f6f6] flex items-center pl-[6px] gap-[11px] shrink-0 leading-none whitespace-nowrap">
              <Tool icon="copydoc" label="复制跨数据" className="w-[99px]" />
              <Tool icon="pastedoc" label="粘贴跨数据" gray className="w-[99px]" />
              <span className="w-[105px] -mt-[2px]">输入当前列数据</span>
              <span className="w-[107px] -mt-[2px]">删除当前列数据</span>
              <span className="w-[62px] -mt-[2px]">页面设置</span>
              <span className="w-[77px] -mt-[2px]">调换起始跨</span>
              <span className="-mt-[2px]">悬臂钢筋代号</span>
            </div>
            <div className="flex-1 bg-white border-l border-r border-t-2 border-[#c4c4c4] flex flex-col min-h-0 w-[1117px]">
              <RebarTable />
              <div className="flex-1" />
              <div className="relative h-[18px] mb-[3px] bg-[#f0f0f0] flex items-center justify-between px-[7px] shrink-0">
                <svg width="8" height="12" viewBox="0 0 8 12"><path d="M6 1 2 6l4 5" stroke="#555" strokeWidth="2" fill="none" /></svg>
                <span className="absolute left-[532px] top-0 w-[309px] h-full bg-[#c9c9c9]" />
                <svg width="8" height="12" viewBox="0 0 8 12"><path d="M2 1l4 5-4 5" stroke="#555" strokeWidth="2" fill="none" /></svg>
              </div>
            </div>
          </div>
          {/* red annotation arrow */}
          <svg className="absolute left-[832px] top-[99px] pointer-events-none" width="74" height="22" viewBox="0 0 74 22">
            <path d="M73 1 21 13l3 7L0 17 18 3l2 6z" fill="#f0231e" />
          </svg>
        </div>
      </div>

      {/* properties */}
      <div className="ml-[2px] flex-1 min-w-0 flex flex-col">
        <TitleBar title="属性编辑器" tools={false} className="-mr-[4px]" />
        <PropEditor />
      </div>
    </div>
  );
}
